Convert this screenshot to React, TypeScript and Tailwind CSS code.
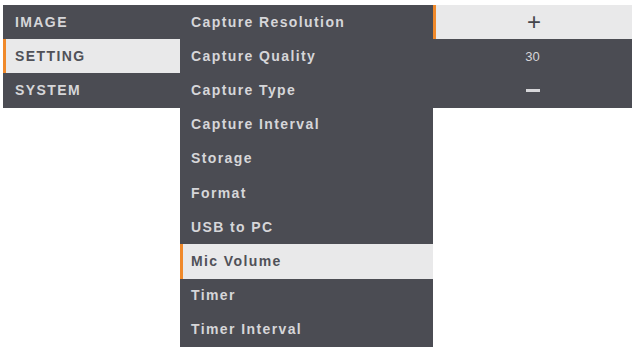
import React from 'react';

const LEFT = ['IMAGE', 'SETTING', 'SYSTEM'];
const MIDDLE = [
  'Capture Resolution',
  'Capture Quality',
  'Capture Type',
  'Capture Interval',
  'Storage',
  'Format',
  'USB to PC',
  'Mic Volume',
  'Timer',
  'Timer Interval',
];

const Row = ({ label, active, className = '' }: { label: React.ReactNode; active?: boolean; className?: string }) => (
  <div
    className={`h-[34.2px] flex items-center text-[14px] font-bold tracking-[0.1em] ${
      active ? 'bg-[#e9e9ea] text-[#505158] border-l-[3px] border-[#f0892a]' : 'text-[#d6d6d9] border-l-[3px] border-transparent'
    } ${className}`}
  >
    {label}
  </div>
);

export default function App() {
  return (
    <div className="w-[635px] h-[350px] bg-white pt-[5px] pl-[3px] flex items-start" style={{ fontFamily: '"Liberation Sans", Arial, sans-serif' }}>
      {/* main categories */}
      <div className="w-[177px] bg-[#4b4c53]">
        {LEFT.map((l, i) => (
          <Row key={l} label={l} active={i === 1} className="pl-[9px] uppercase text-[13px]" />
        ))}
      </div>

      {/* settings list */}
      <div className="w-[253px] bg-[#4b4c53]">
        {MIDDLE.map((m, i) => (
          <Row key={m} label={m} active={i === 7} className="pl-[8px]" />
        ))}
      </div>

      {/* value adjust */}
      <div className="w-[199px] bg-[#4b4c53]">
        <div className="h-[34.2px] flex items-center justify-center bg-[#e9e9ea] border-l-[3px] border-[#f0892a] text-[#45464c] text-[24px] font-normal leading-none">
          +
        </div>
        <div className="h-[34.2px] flex items-center justify-center text-[#d6d6d9] text-[13px]">
          30
        </div>
        <div className="h-[34.2px] flex items-center justify-center">
          <div className="w-[14px] h-[3px] bg-[#d6d6d9]" />
        </div>
      </div>
    </div>
  );
}
